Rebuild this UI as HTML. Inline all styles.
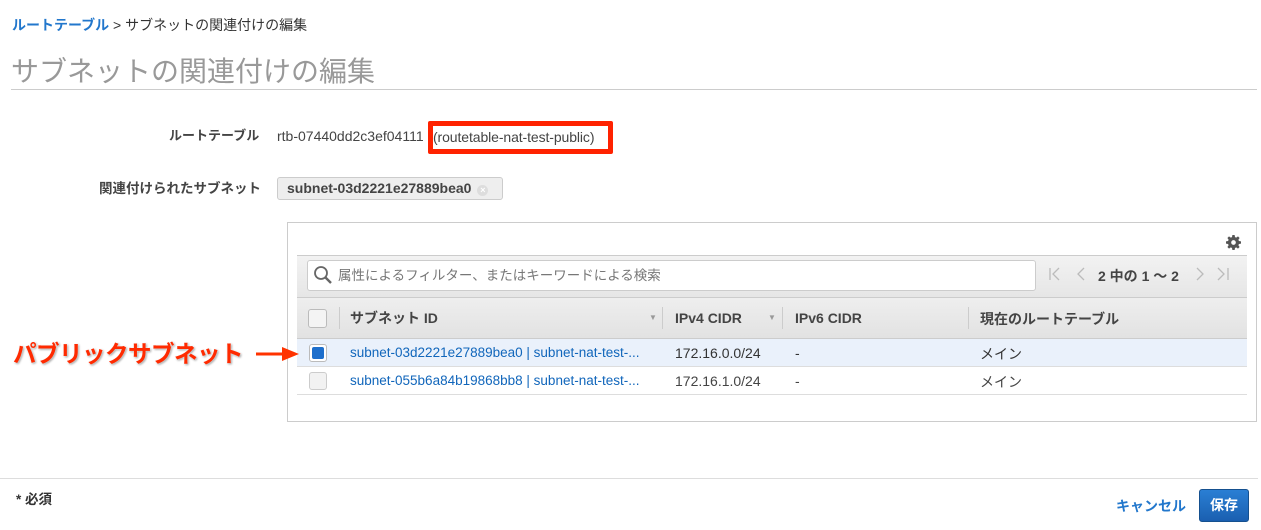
<!DOCTYPE html>
<html><head><meta charset="utf-8"><style>
*{box-sizing:border-box;margin:0;padding:0}
body{width:1261px;height:530px;background:#fff;font-family:"Liberation Sans","Noto Sans CJK JP",sans-serif;color:#444;position:relative;overflow:hidden;font-size:14px}
.a{position:absolute;white-space:nowrap}
.t{position:absolute;white-space:nowrap;height:20px;line-height:20px}
</style></head><body>
<div class="t" style="left:12px;top:15px;font-size:14px;color:#333"><span style="color:#2277cc;font-weight:bold">ルートテーブル</span> &gt; サブネットの関連付けの編集</div>
<div class="a" style="left:11px;top:56px;font-size:28px;line-height:32px;color:#999">サブネットの関連付けの編集</div>
<div class="a" style="left:11px;top:89px;width:1246px;height:1px;background:#ccc"></div>

<div class="t" style="left:169px;top:126px;font-weight:bold;color:#444;font-size:13px">ルートテーブル</div>
<div class="t" style="left:277px;top:126px;color:#444;font-size:14px">rtb-07440dd2c3ef04111</div>
<div class="a" style="left:428px;top:121px;width:185px;height:33px;border:5px solid #ff2200;border-radius:2px"></div>
<div class="t" style="left:433px;top:127px;color:#444;font-size:14px;letter-spacing:-0.1px">(routetable-nat-test-public)</div>

<div class="t" style="left:99px;top:179px;font-weight:bold;font-size:13.5px">関連付けられたサブネット</div>
<div class="a" style="left:277px;top:177px;width:226px;height:23px;border:1px solid #ccc;border-radius:3px;background:#eee;padding:0 9px;line-height:21px;font-weight:bold;color:#444;font-size:14px">subnet-03d2221e27889bea0 <span style="display:inline-block;width:11px;height:11px;border-radius:50%;background:#ddd;color:#fff;font-size:9px;line-height:11px;text-align:center;vertical-align:0px;margin-left:2px">×</span></div>

<div class="a" style="left:287px;top:222px;width:970px;height:200px;border:1px solid #ccc"></div>
<svg class="a" style="left:1226px;top:235px" width="15" height="15" viewBox="0 0 16 16"><path fill="#555" d="M6.8 0h2.4l.4 2.2 1.3.6 1.9-1.3 1.7 1.7-1.3 1.9.6 1.3 2.2.4v2.4l-2.2.4-.6 1.3 1.3 1.9-1.7 1.7-1.9-1.3-1.3.6-.4 2.2H6.8l-.4-2.2-1.3-.6-1.9 1.3-1.7-1.7 1.3-1.9-.6-1.3L0 9.2V6.8l2.2-.4.6-1.3-1.3-1.9 1.7-1.7 1.9 1.3 1.3-.6z"/><circle cx="8" cy="8" r="2.5" fill="#fff"/></svg>

<div class="a" style="left:297px;top:255px;width:950px;height:42px;background:linear-gradient(#f2f2f2,#e6e6e6);border-top:1px solid #ccc"></div>
<div class="a" style="left:307px;top:260px;width:729px;height:31px;background:#fff;border:1px solid #ccc;border-radius:3px"></div>
<svg class="a" style="left:313px;top:265px" width="20" height="20" viewBox="0 0 20 20"><circle cx="8" cy="8" r="6" fill="none" stroke="#666" stroke-width="1.8"/><path d="M12.5 12.5l5.5 5.5" stroke="#666" stroke-width="2.4"/></svg>
<div class="t" style="left:338px;top:266px;color:#777;font-size:13.5px">属性によるフィルター、またはキーワードによる検索</div>
<svg class="a" style="left:1048px;top:266px" width="40" height="16" viewBox="0 0 40 16"><path d="M2 2v12M11 2L5 8l6 6M36 2l-6 6 6 6" fill="none" stroke="#bbb" stroke-width="1.3"/></svg>
<div class="t" style="left:1098px;top:266px;color:#444;font-weight:bold;font-size:14px">2 中の 1 ～ 2</div>
<svg class="a" style="left:1193px;top:266px" width="40" height="16" viewBox="0 0 40 16"><path d="M4 2l6 6-6 6M25 2l6 6-6 6M35 2v12" fill="none" stroke="#bbb" stroke-width="1.3"/></svg>

<div class="a" style="left:297px;top:297px;width:950px;height:42px;background:linear-gradient(#eee,#e2e2e2);border-top:1px solid #ccc;border-bottom:1px solid #ccc"></div>
<div class="a" style="left:308px;top:309px;width:19px;height:19px;border:1px solid #bbb;border-radius:3px;background:#f4f4f4"></div>
<div class="a" style="left:339px;top:307px;width:1px;height:22px;background:#ccc"></div>
<div class="t" style="left:350px;top:308px;font-weight:bold;font-size:14px;color:#444">サブネット ID</div>
<div class="t" style="left:649px;top:308px;font-size:8px;color:#999">▼</div>
<div class="a" style="left:662px;top:307px;width:1px;height:22px;background:#ccc"></div>
<div class="t" style="left:675px;top:308px;font-weight:bold;font-size:14px;color:#444">IPv4 CIDR</div>
<div class="t" style="left:768px;top:308px;font-size:8px;color:#999">▼</div>
<div class="a" style="left:782px;top:307px;width:1px;height:22px;background:#ccc"></div>
<div class="t" style="left:795px;top:308px;font-weight:bold;font-size:14px;color:#444">IPv6 CIDR</div>
<div class="a" style="left:968px;top:307px;width:1px;height:22px;background:#ccc"></div>
<div class="t" style="left:980px;top:309px;font-weight:bold;font-size:14px;color:#444">現在のルートテーブル</div>

<div class="a" style="left:297px;top:339px;width:950px;height:28px;background:#eaf1fb;border-bottom:1px solid #ddd"></div>
<div class="a" style="left:309px;top:344px;width:18px;height:18px;border:1px solid #bbb;border-radius:3px;background:#fff"></div>
<div class="a" style="left:312px;top:347px;width:12px;height:12px;border-radius:2px;background:#1e6fcc"></div>
<div class="t" style="left:350px;top:343px;color:#1166bb;font-size:13.5px">subnet-03d2221e27889bea0 | subnet-nat-test-...</div>
<div class="t" style="left:675px;top:343px;font-size:14px;color:#333">172.16.0.0/24</div>
<div class="t" style="left:795px;top:343px;font-size:14px;color:#333">-</div>
<div class="t" style="left:980px;top:344px;font-size:14px;color:#333">メイン</div>

<div class="a" style="left:297px;top:367px;width:950px;height:28px;border-bottom:1px solid #ddd"></div>
<div class="a" style="left:309px;top:372px;width:18px;height:18px;border:1px solid #ccc;border-radius:3px;background:#f2f2f2"></div>
<div class="t" style="left:350px;top:371px;color:#1166bb;font-size:13.5px">subnet-055b6a84b19868bb8 | subnet-nat-test-...</div>
<div class="t" style="left:675px;top:371px;font-size:14px;color:#444">172.16.1.0/24</div>
<div class="t" style="left:795px;top:371px;font-size:14px;color:#444">-</div>
<div class="t" style="left:980px;top:372px;font-size:14px;color:#444">メイン</div>

<div class="a" style="left:13px;top:339px;font-size:23.5px;line-height:30px;font-weight:bold;color:#ff2a00;letter-spacing:-0.5px;text-shadow:0 0 2px #fff,1px 1px 2px #888">パブリックサブネット</div>
<svg class="a" style="left:252px;top:344px" width="50" height="20" viewBox="0 0 50 20"><path d="M4 10H32" stroke="#ff3300" stroke-width="3"/><path d="M30 3L47 10L30 17Z" fill="#ff3300"/></svg>

<div class="a" style="left:0;top:478px;width:1258px;height:1px;background:#ddd"></div>
<div class="t" style="left:16px;top:490px;font-weight:bold;font-size:13.5px;color:#333">* 必須</div>
<div class="t" style="left:1116px;top:496px;font-weight:bold;font-size:14px;color:#2277cc">キャンセル</div>
<div class="a" style="left:1199px;top:489px;width:50px;height:33px;border-radius:3px;background:linear-gradient(#2a7fd4,#1a5fb0);border:1px solid #15508f;color:#fff;font-weight:bold;font-size:14px;text-align:center;line-height:31px">保存</div>
</body></html>
